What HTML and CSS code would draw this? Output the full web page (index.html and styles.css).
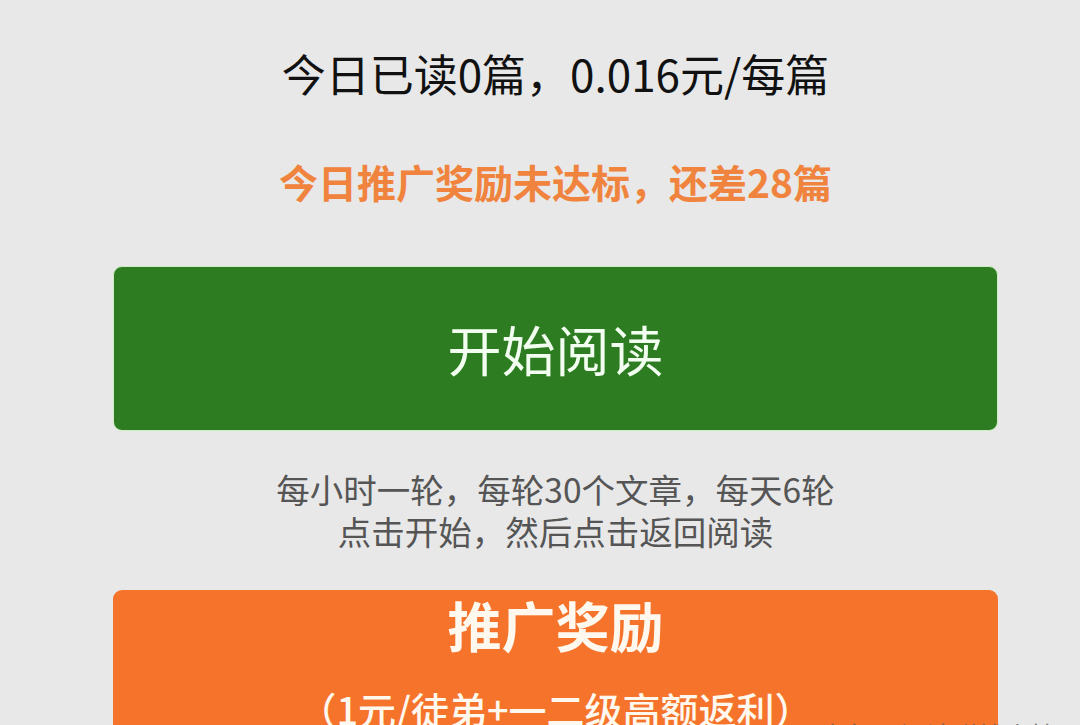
FILE: index.html
```html
<!DOCTYPE html>
<html lang="zh-CN">
<head>
    <meta charset="UTF-8">
    <meta name="viewport" content="width=device-width, initial-scale=1.0">
    <title>阅读</title>
    <link rel="stylesheet" href="styles.css">
</head>
<body>
    <div class="page">
        <p class="read-count">今日已读0篇，0.016元/每篇</p>
        <p class="promo-tip">今日推广奖励未达标，还差28篇</p>

        <button class="start-btn">开始阅读</button>

        <div class="notes">
            <p>每小时一轮，每轮30个文章，每天6轮</p>
            <p>点击开始，然后点击返回阅读</p>
        </div>

        <div class="reward-box">
            <div class="reward-title">推广奖励</div>
            <div class="reward-sub">（1元/徒弟+一二级高额返利）</div>
        </div>
    </div>

    <div class="watermark">
        <span class="watermark-dot"></span>
        <span>头条 @阅读赚钱小技巧</span>
    </div>
</body>
</html>
```

FILE: styles.css
```css
body {
    margin: 0;
    padding: 0;
    background-color: #e8e8e8;
    font-family: "Noto Sans CJK SC", "Noto Sans", sans-serif;
    overflow: hidden;
    height: 725px;
}

.page {
    width: 885px;
    margin-left: 113px;
    padding-top: 43px;
    text-align: center;
}

p {
    margin: 0;
}

.read-count {
    font-size: 44px;
    line-height: 60px;
    color: #111;
}

.promo-tip {
    margin-top: 51px;
    font-size: 39px;
    line-height: 54px;
    font-weight: bold;
    color: #f0843e;
}

.start-btn {
    display: block;
    width: 100%;
    height: 165px;
    margin-top: 58px;
    border: 1px solid #cdeec4;
    border-radius: 9px;
    background-color: #2e7c22;
    color: #f2fff0;
    font-family: inherit;
    font-size: 54px;
    cursor: pointer;
}

.notes {
    margin-top: 37px;
    font-size: 33.5px;
    line-height: 42px;
    color: #555;
}

.reward-box {
    margin-top: 38px;
    height: 200px;
    border-radius: 9px;
    background-color: #f5732a;
    color: #fff8ee;
}

.reward-title {
    font-size: 54px;
    line-height: 70px;
    font-weight: bold;
}

.reward-sub {
    margin-top: 22px;
    font-size: 38px;
    line-height: 53px;
    font-weight: 500;
}

.watermark {
    position: absolute;
    left: 786px;
    top: 716px;
    display: flex;
    align-items: center;
    gap: 8px;
    font-size: 26px;
    color: rgba(90, 90, 90, 0.75);
}

.watermark-dot {
    width: 24px;
    height: 24px;
    border-radius: 50%;
    background-color: rgba(70, 70, 70, 0.7);
}
```
